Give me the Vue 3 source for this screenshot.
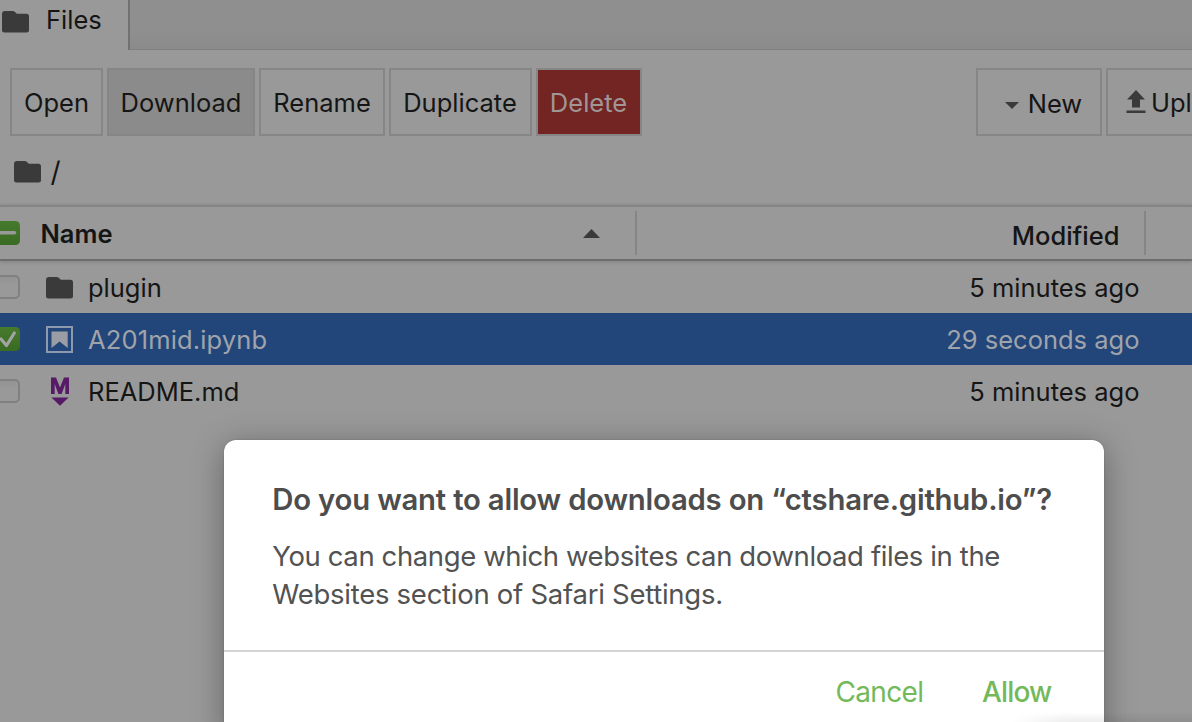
<script setup>
const actions = [
  { label: 'Open', cls: 'open' },
  { label: 'Download', cls: 'download' },
  { label: 'Rename', cls: 'rename' },
  { label: 'Duplicate', cls: 'duplicate' },
  { label: 'Delete', cls: 'delete' },
]
const files = [
  { name: 'plugin', icon: 'folder', time: '5 minutes ago', checked: false, cls: 'r-plugin' },
  { name: 'A201mid.ipynb', icon: 'notebook', time: '29 seconds ago', checked: true, cls: 'r-notebook' },
  { name: 'README.md', icon: 'markdown', time: '5 minutes ago', checked: false, cls: 'r-readme' },
]
const folderPath = 'M3 0H10.5Q12 0 13 1L14.8 2.8H24.5Q27 2.8 27 5.3V19.1Q27 21.6 24.5 21.6H2.5Q0 21.6 0 19.1V2.9Q0 0 3 0Z'
</script>

<template>
  <div class="page">
    <header class="tabs">
      <div class="tab">
        <svg class="folder" viewBox="0 0 27 22"><path :d="folderPath" /></svg>
        <span>Files</span>
      </div>
      <div class="tab-rest"></div>
    </header>

    <div class="toolbar">
      <button v-for="a in actions" :key="a.label" class="btn" :class="a.cls"><span>{{ a.label }}</span></button>
      <div class="spacer"></div>
      <button class="btn new">
        <svg class="caret" viewBox="0 0 14 7"><path d="M0 0H14L7 7Z" /></svg>
        <span>New</span>
      </button>
      <button class="btn upload">
        <svg class="up" viewBox="0 0 20 23"><path d="M10 0L19 9.5H14V17.5H6V9.5H1ZM.5 20.5H19.5V23H.5Z" /></svg>
        <span>Upload</span>
      </button>
    </div>

    <nav class="crumbs">
      <svg class="folder" viewBox="0 0 27 22"><path :d="folderPath" /></svg>
      <span class="slash">/</span>
    </nav>

    <div class="head">
      <svg class="check" viewBox="0 0 24 24">
        <defs>
          <linearGradient id="green" x1="0" y1="0" x2="0" y2="1">
            <stop offset="0" stop-color="#467a2d" /><stop offset="1" stop-color="#396b22" />
          </linearGradient>
        </defs>
        <rect width="24" height="24" rx="4.5" fill="url(#green)" />
        <path d="M3.5 11.8H18.5" stroke="#999" stroke-width="3.6" stroke-linecap="round" />
      </svg>
      <div class="col-name"><b>Name</b>
        <svg class="sort" viewBox="0 0 17 9"><path d="M8.5 0L17 9H0Z" /></svg>
      </div>
      <div class="col-mod"><span>Modified</span></div>
    </div>

    <div v-for="f in files" :key="f.name" class="row" :class="[f.cls, { selected: f.checked }]">
      <svg v-if="f.checked" class="check" viewBox="0 0 24 24">
        <rect width="24" height="24" rx="4.5" fill="url(#green)" />
        <path d="M5 12L10.5 18.5L18.3 6" fill="none" stroke="#a3a3a3" stroke-width="3.2" stroke-linecap="round" stroke-linejoin="round" />
      </svg>
      <div v-else class="box"></div>
      <div class="ficon">
        <svg v-if="f.icon === 'folder'" class="folder" viewBox="0 0 27 22"><path :d="folderPath" /></svg>
        <svg v-else-if="f.icon === 'notebook'" class="nb" viewBox="0 0 27 27">
          <rect x="1" y="1" width="25" height="25" fill="none" stroke="#8d99ac" stroke-width="2" />
          <path d="M5.5 5.5H21.7V22L13.6 15.5L5.5 22Z" fill="#9a9da3" />
        </svg>
        <svg v-else class="md" viewBox="0 0 20 29">
          <path d="M1 17V.5H6L10 10.5L14 .5H19V17H15.3V7L11.6 17H8.4L4.7 7V17Z" fill="#561a66" />
          <path d="M1.4 20.5H18.6L10 28.8Z" fill="#561a66" />
        </svg>
      </div>
      <span class="fname">{{ f.name }}</span>
      <span class="time">{{ f.time }}</span>
    </div>

    <section class="dialog">
      <div class="body">
        <h1>Do you want to allow downloads on “ctshare.github.io”?</h1>
        <p class="l1">You can change which websites can download files in the</p>
        <p class="l2">Websites section of Safari Settings.</p>
      </div>
      <footer>
        <span class="cancel">Cancel</span>
        <span class="allow">Allow</span>
      </footer>
    </section>
    <div class="edge-shade"></div>
  </div>
</template>

<style>
body { margin: 0; overflow: hidden; }
</style>

<style scoped>
.page {
  position: relative;
  width: 1192px;
  height: 722px;
  overflow: hidden;
  background: #999;
  color: #151515;
  font: 400 25.5px/32px Inter, "Liberation Sans", sans-serif;
  white-space: nowrap;
}
svg { display: block; flex: none; }
.folder { width: 27px; height: 22px; fill: #3a3a3a; }
.tabs { display: flex; height: 50px; }
.tab { width: 128px; display: flex; align-items: flex-start; border-right: 2px solid #717171; box-sizing: content-box; }
.tab .folder { margin: 11px 17px 0 2.4px; }
.tab span { margin: 4px 0 0 -.4px; }
.tab-rest { flex: 1; box-sizing: border-box; background: linear-gradient(#8f8f8f 60%, #8b8b8b); border-bottom: 1px solid #808080; }
.toolbar { display: flex; gap: 4px; padding: 18px 0 0 10px; height: 68px; }
.btn {
  box-sizing: border-box; flex: none; height: 68px; padding: 2px 0 0; border: 2px solid #868686;
  background: none; color: inherit; font: inherit; display: flex; align-items: center; justify-content: center;
}
.open { width: 93px; }
.download { width: 148px; background: #8b8b8b; }
.rename { width: 126px; }
.duplicate { width: 143px; padding-right: 1px; }
.delete { width: 106px; padding-right: 1px; background: #722522; color: #a09696; }
.spacer { flex: 1; }
.new { width: 126px; padding: 4px 0 0 9px; }
.caret { width: 14px; height: 7px; fill: #3a3a3a; margin: 3px 9px 0 0; }
.upload { width: 160px; margin-right: -74px; justify-content: flex-start; padding-left: 18px; }
.up { width: 20px; height: 23px; fill: #3a3a3a; margin: 0 5px 4px 0; }
.crumbs { display: flex; align-items: center; gap: 10px; height: 69px; box-sizing: border-box; padding: 3px 0 0 14.4px; }
.slash { font-size: 28px; margin-left: -1px; }
.head {
  display: flex; align-items: center; height: 56px; box-sizing: border-box;
  border-top: 2px solid #858585; border-bottom: 2px solid #6d6d6d;
  box-shadow: 0 -1px 2px rgba(0,0,0,.08), 0 2px 3px rgba(0,0,0,.1);
}
.check { width: 24px; height: 24px; margin: -1px 0 0 -4px; }
.col-name { display: flex; align-items: center; width: 615px; height: 44px; border-right: 2px solid #858585; }
.col-name b { font-weight: 600; margin: 1px 0 0 20.5px; flex: 1; }
.sort { width: 17px; height: 9px; fill: #3a3a3a; margin-right: 35px; }
.col-mod { width: 507px; box-sizing: content-box; height: 44px; display: flex; justify-content: flex-end; align-items: center; border-right: 2px solid #858585; }
.col-mod span { margin: 5px 24.5px 0 0; font-weight: 500; }
.row { display: flex; align-items: center; height: 52px; }
.fname, .time { margin-top: 2px; }
.selected { background: #22467a; color: #a0a4aa; }
.selected .fname { letter-spacing: .15px; }
.box { width: 24px; height: 24px; margin: 0 0 0 -4px; box-sizing: border-box; border: 2px solid #808080; border-radius: 5px; background: linear-gradient(#939393, #999 40%); }
.ficon { width: 68px; display: flex; padding: 1px 0 0 26.4px; box-sizing: border-box; }
.nb { width: 27px; height: 27px; }
.md { width: 20px; height: 29px; margin-left: 3.6px; }
.fname { flex: 1; }
.time { margin-right: 52.5px; }
.dialog {
  position: absolute; left: 224px; top: 440px; width: 880px; height: 300px;
  background: #fff; border-radius: 12px; color: #4d4d4d;
  box-shadow: 0 6px 32px rgba(0,0,0,.34), 0 0 2px rgba(0,0,0,.2);
}
.edge-shade {
  position: absolute; left: 1010px; right: 0; top: 712px; height: 10px;
  background: linear-gradient(rgba(0,0,0,0), rgba(0,0,0,.07));
  mask-image: linear-gradient(to right, transparent, #000 60px);
}
.body { height: 212px; padding: 41px 0 0 48px; box-sizing: border-box; border-bottom: 2px solid #d4d4d4; }
h1 { margin: 0 0 18px .3px; font-size: 29.3px; letter-spacing: -.2px; line-height: 38px; font-weight: 600; width: max-content; }
p { margin: 0 0 0 .3px; font-size: 27.5px; line-height: 38px; color: #525252; width: max-content; }
.l1 { letter-spacing: -.39px; }
.l2 { letter-spacing: -.27px; }
footer { display: flex; justify-content: flex-end; padding: 21px 52.5px 0 0; gap: 58.5px; font-size: 28px; line-height: 38px; color: #73b95a; }
.cancel { letter-spacing: -.65px; }
.allow { font-weight: 500; letter-spacing: -.8px; }
</style>
